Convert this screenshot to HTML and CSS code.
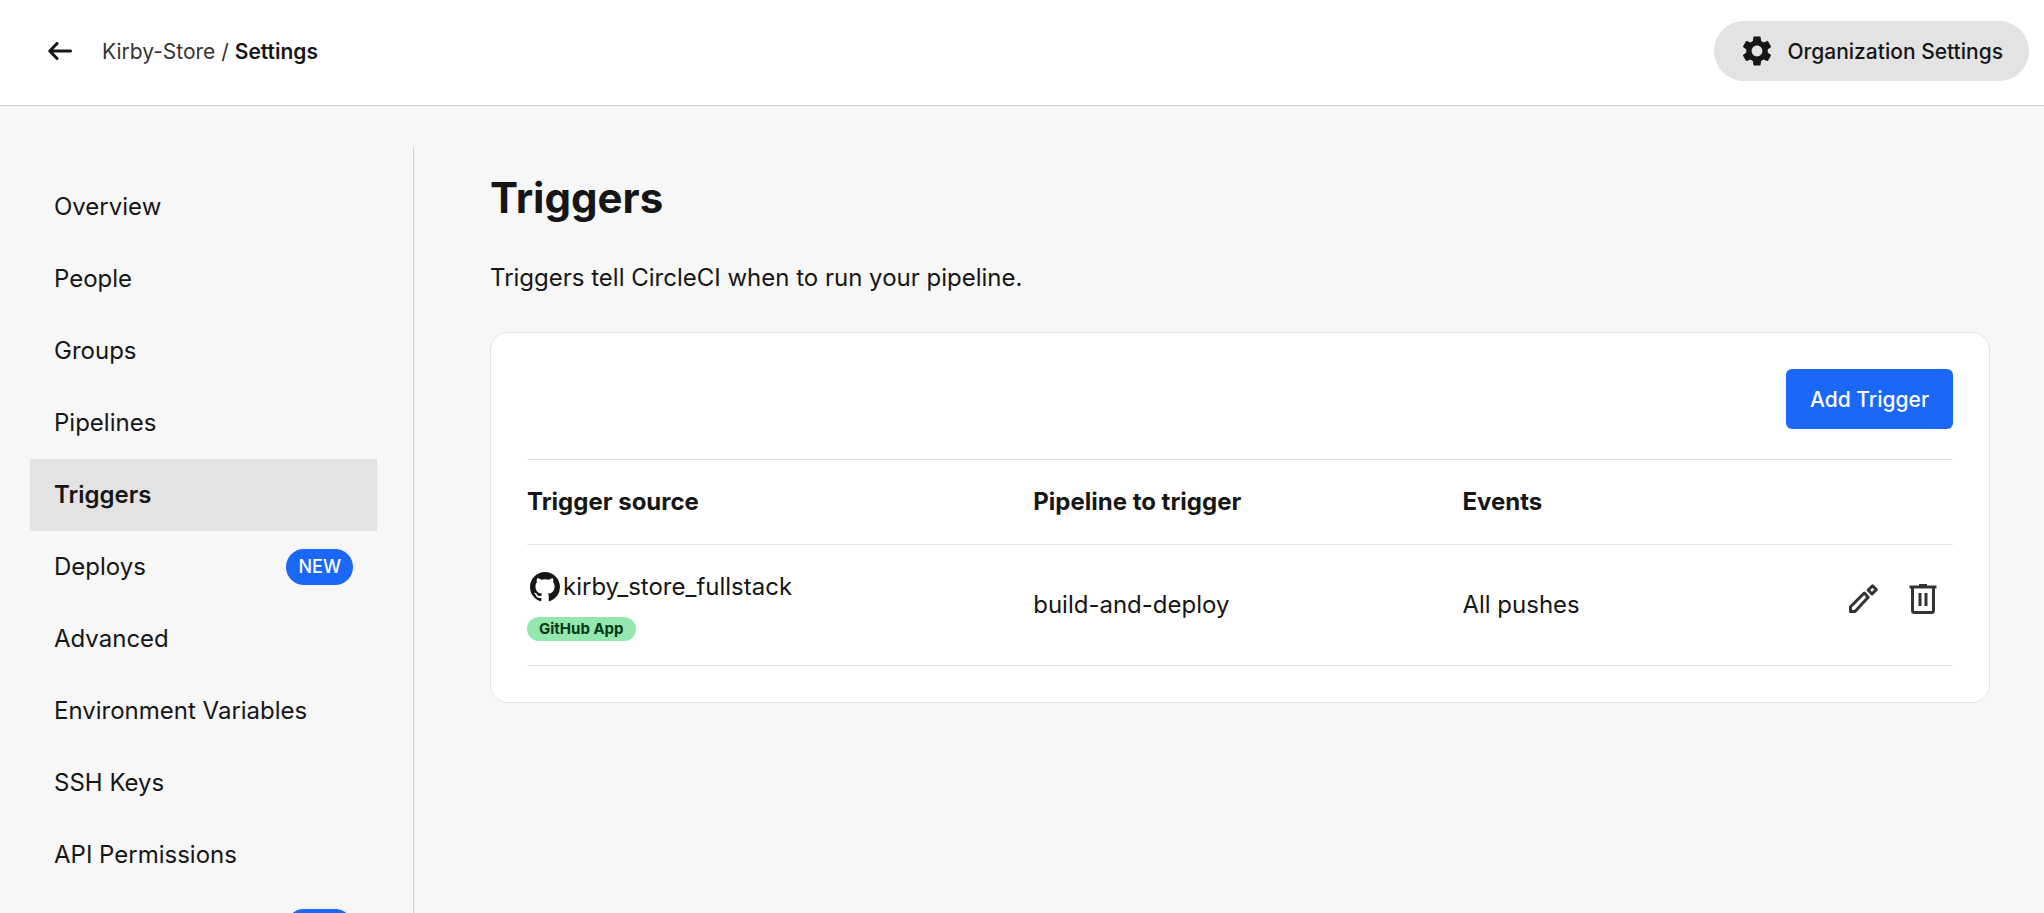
FILE: index.html
```html
<!DOCTYPE html>
<html lang="en">
<head>
<meta charset="utf-8">
<title>Kirby-Store / Settings</title>
<link rel="stylesheet" href="styles.css">
</head>
<body>
<header class="topbar">
  <button class="icon-button back" type="button" aria-label="Back">
    <svg width="24" height="18" viewBox="0 0 24 18" fill="none" stroke="currentColor" stroke-width="3" stroke-linecap="round" stroke-linejoin="round"><path d="M22.500 9H2M9 1.500L1.800 9L9 16.500"/></svg>
  </button>
  <nav class="crumbs" aria-label="Breadcrumb"><a href="#">Kirby-Store</a> / <strong>Settings</strong></nav>
  <button class="org-button" type="button">
    <svg width="36" height="36" viewBox="0 0 24 24" fill="currentColor"><path d="M19.140 12.940c.040-.3.060-.610.060-.940 0-.320-.020-.640-.070-.940l2.030-1.580c.180-.140.230-.410.120-.610l-1.920-3.320c-.120-.220-.370-.290-.590-.220l-2.390.960c-.5-.380-1.030-.7-1.620-.940l-.360-2.540c-.040-.240-.240-.410-.480-.410h-3.840c-.240 0-.430.170-.470.410l-.360 2.540c-.590.240-1.130.570-1.620.940l-2.390-.960c-.220-.080-.470 0-.590.220L2.740 8.870c-.120.210-.080.470.120.610l2.030 1.580c-.050.3-.090.630-.090.940s.020.640.070.940l-2.030 1.580c-.180.140-.230.410-.120.610l1.920 3.320c.120.220.370.290.590.220l2.390-.960c.5.380 1.030.7 1.620.940l.360 2.540c.050.240.240.410.480.410h3.840c.240 0 .440-.170.470-.410l.360-2.540c.590-.240 1.130-.560 1.620-.940l2.390.960c.220.080.470 0 .590-.220l1.920-3.320c.120-.220.070-.470-.120-.610l-2.010-1.580zM12 15.600c-1.980 0-3.600-1.620-3.600-3.600s1.620-3.600 3.600-3.600 3.600 1.620 3.600 3.600-1.620 3.600-3.600 3.600z"/></svg>
    <span>Organization Settings</span>
  </button>
</header>
<div class="layout">
  <nav class="sidebar" aria-label="Settings">
    <a class="item" href="#">Overview</a>
    <a class="item" href="#">People</a>
    <a class="item" href="#">Groups</a>
    <a class="item" href="#">Pipelines</a>
    <a class="item active" href="#" aria-current="page">Triggers</a>
    <a class="item" href="#">Deploys<span class="new-badge">NEW</span></a>
    <a class="item" href="#">Advanced</a>
    <a class="item" href="#">Environment Variables</a>
    <a class="item" href="#">SSH Keys</a>
    <a class="item" href="#">API Permissions</a>
    <a class="item" href="#"><span class="new-badge">NEW</span></a>
  </nav>
  <main class="content">
    <h1>Triggers</h1>
    <p class="intro">Triggers tell CircleCI when to run your pipeline.</p>
    <section class="card">
      <div class="card-actions"><button class="primary" type="button">Add Trigger</button></div>
      <table class="triggers">
        <thead>
          <tr><th class="col-source" scope="col">Trigger source</th><th class="col-pipeline" scope="col">Pipeline to trigger</th><th class="col-events" scope="col">Events</th><td></td></tr>
        </thead>
        <tbody>
          <tr>
            <td>
              <div class="source">
                <svg width="30" height="30" viewBox="0 0 16 16" fill="currentColor"><path d="M8 0C3.580 0 0 3.580 0 8c0 3.540 2.290 6.530 5.470 7.590.4.070.550-.170.550-.380 0-.190-.010-.820-.010-1.490-2.010.370-2.530-.490-2.690-.940-.090-.230-.480-.940-.820-1.130-.280-.150-.680-.520-.010-.530.630-.010 1.080.580 1.230.820.720 1.210 1.870.870 2.330.660.070-.520.280-.870.510-1.070-1.780-.2-3.640-.890-3.640-3.950 0-.870.310-1.590.820-2.150-.080-.2-.360-1.020.080-2.120 0 0 .670-.210 2.200.820.640-.180 1.320-.270 2-.270s1.360.090 2 .270c1.530-1.040 2.200-.820 2.200-.820.440 1.100.160 1.920.080 2.120.510.560.820 1.270.820 2.150 0 3.070-1.870 3.750-3.650 3.950.290.250.540.730.540 1.480 0 1.070-.010 1.930-.010 2.200 0 .210.150.460.550.380A8.010 8.010 0 0 0 16 8c0-4.420-3.580-8-8-8z"/></svg>
                <span>kirby_store_fullstack</span>
              </div>
              <span class="tag">GitHub App</span>
            </td>
            <td>build-and-deploy</td>
            <td>All pushes</td>
            <td>
              <div class="row-actions">
                <button class="icon-button" type="button" aria-label="Edit trigger">
                  <svg width="36" height="36" viewBox="0 0 36 36" fill="none" stroke="currentColor" stroke-width="3" stroke-linejoin="round"><path d="M5.500 30.500V25.800L19.300 12L23.200 16.200L10 30.500ZM23.200 9L27.500 4.800L31.300 8.600L27 13Z"/></svg>
                </button>
                <button class="icon-button" type="button" aria-label="Delete trigger">
                  <svg width="36" height="36" viewBox="0 0 36 36" fill="none" stroke="currentColor" stroke-width="3"><path d="M4.500 6h27M14 4.500h8M7.500 6v23.500a2 2 0 0 0 2 2h17a2 2 0 0 0 2-2V6M15 12v13M21 12v13"/></svg>
                </button>
              </div>
            </td>
          </tr>
        </tbody>
      </table>
    </section>
  </main>
</div>
</body>
</html>
```
FILE: styles.css
```css
* { box-sizing: border-box; }
body {
  margin: 0;
  height: 100vh;
  overflow: hidden;
  display: flex;
  flex-direction: column;
  background: #f7f7f7;
  color: #161616;
  font-family: Inter, "Liberation Sans", sans-serif;
  font-size: 24px;
  line-height: 36px;
}
a { color: inherit; text-decoration: none; }
button { font-family: inherit; border: 0; cursor: pointer; }
svg { display: block; flex: none; }
.topbar {
  flex: none;
  display: flex;
  align-items: center;
  padding: 21px 15px 24px 48px;
  background: #fff;
  border-bottom: 1px solid #d0d0d0;
}
.icon-button { padding: 0; background: none; color: #343434; }
.back { color: #161616; }
.crumbs { margin-left: 30px; font-size: 21px; line-height: 31px; color: #343434; }
.crumbs strong { font-weight: 600; color: #161616; }
.org-button {
  display: flex;
  align-items: center;
  gap: 12px;
  height: 60px;
  margin-left: auto;
  padding: 0 26px 0 25px;
  border-radius: 30px;
  background: #e3e3e3;
  color: #161616;
  font-size: 21px;
  font-weight: 500;
}
.layout { flex: 1; min-height: 0; display: flex; padding-top: 41px; }
.sidebar {
  flex: none;
  width: 414px;
  padding: 24px 36px 0 30px;
  border-right: 1px solid #d0d0d0;
  overflow: hidden;
}
.item { display: flex; align-items: center; height: 72px; padding: 0 24px; }
.item.active { background: #e3e3e3; font-weight: 600; }
.new-badge {
  margin-left: auto;
  padding: 0 12px;
  border-radius: 18px;
  background: #1b67f8;
  color: #fff;
  font-size: 18px;
  font-weight: 500;
}
.content { flex: 1; min-width: 0; padding: 24px 54px 0 76px; }
h1 { margin: 0; font-size: 42px; line-height: 54px; font-weight: 700; }
.intro { margin: 35px 0 36px; }
.card { padding: 36px; border: 1px solid #e3e3e3; border-radius: 18px; background: #fff; }
.card-actions { display: flex; justify-content: flex-end; margin-bottom: 30px; }
.primary {
  height: 60px;
  padding: 0 24px;
  border-radius: 6px;
  background: #1b67f8;
  color: #fff;
  font-size: 21px;
  font-weight: 500;
}
.triggers { width: 100%; border-collapse: collapse; table-layout: fixed; border-top: 1px solid #e3e3e3; }
.triggers tr { border-bottom: 1px solid #e3e3e3; }
.triggers th, .triggers td { padding: 24px 0; text-align: left; font-weight: 400; vertical-align: middle; }
.triggers th { font-weight: 700; }
.col-source { width: 35.5%; }
.col-pipeline { width: 30.1%; }
.col-events { width: 21%; }
.source { display: flex; align-items: center; gap: 3px; padding-left: 3px; margin-bottom: 12px; }
.tag {
  display: block;
  width: fit-content;
  padding: 0 12px;
  border-radius: 12px;
  background: #94e8ae;
  color: #04381a;
  font-size: 15px;
  line-height: 24px;
  font-weight: 700;
}
.row-actions { display: flex; justify-content: flex-end; gap: 24px; padding: 0 12px 12px 0; }
```
